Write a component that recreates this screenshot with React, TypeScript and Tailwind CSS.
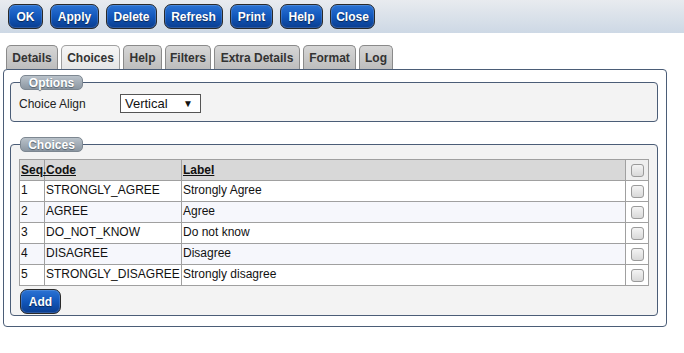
import React from "react";

const buttons: [string, number][] = [
  ["OK", 35],
  ["Apply", 49],
  ["Delete", 51],
  ["Refresh", 59],
  ["Print", 43],
  ["Help", 43],
  ["Close", 45],
];

const tabs: [string, number][] = [
  ["Details", 52],
  ["Choices", 59],
  ["Help", 39],
  ["Filters", 46],
  ["Extra Details", 86],
  ["Format", 53],
  ["Log", 34],
];

const rows = [
  ["1", "STRONGLY_AGREE", "Strongly Agree"],
  ["2", "AGREE", "Agree"],
  ["3", "DO_NOT_KNOW", "Do not know"],
  ["4", "DISAGREE", "Disagree"],
  ["5", "STRONGLY_DISAGREE", "Strongly disagree"],
];

function Btn({ label, w }: { label: string; w: number }) {
  return (
    <div
      style={{ width: w }}
      className="h-[25px] flex items-center justify-center rounded-[7px] border border-[#2a2a2a] bg-gradient-to-b from-[#2b73d4] via-[#1257bb] to-[#0a3d8f] text-white text-[12px] font-bold [text-shadow:0_1px_1px_#0a2450] shadow-[0_0_0_1px_rgba(255,255,255,0.15)_inset]"
    >
      {label}
    </div>
  );
}

function Check() {
  return (
    <div className="w-[13px] h-[13px] rounded-[3px] border border-[#9a9a9a] bg-gradient-to-b from-[#f4f4f4] to-[#d8d8d8]" />
  );
}

function Legend({ text }: { text: string }) {
  return (
    <legend className="ml-[1px] p-0">
      <div className="w-[63px] h-[15px] flex items-center justify-center rounded-[5px] border border-[#7d8791] bg-gradient-to-b from-[#b9c2ca] to-[#8c97a2] text-white text-[12px] font-bold leading-none [text-shadow:0_1px_1px_#55606b]">
        {text}
      </div>
    </legend>
  );
}

export default function App() {
  return (
    <div className="w-[684px] h-[353px] bg-white overflow-hidden text-[#222]" style={{ fontFamily: '"Liberation Sans", Arial, sans-serif' }}>
      <div className="h-[33px] bg-gradient-to-b from-[#e8ebef] to-[#cdd8e5] flex items-center pl-[8px] gap-[7px]">
        {buttons.map(([l, w]) => (
          <Btn key={l} label={l} w={w} />
        ))}
      </div>

      <div className="mt-[12px] ml-[6px] flex gap-[3px] h-[24px] items-end relative z-10">
        {tabs.map(([t, w]) => {
          const active = t === "Choices";
          return (
            <div
              key={t}
              style={{ width: w }}
              className={
                "h-[24px] flex items-center justify-center text-[12px] font-bold text-[#333] border border-b-0 rounded-t-[5px] " +
                (active
                  ? "border-[#a0a0a0] bg-gradient-to-b from-[#f6f6f6] to-[#e6e6e6]"
                  : "border-[#8a8a8a] bg-gradient-to-b from-[#d6d6d6] to-[#bdbdbd]")
              }
            >
              {t}
            </div>
          );
        })}
      </div>

      <div className="ml-[3px] w-[664px] h-[258px] border border-[#4b5d77] rounded-[4px] px-[6px] pt-[5px]">
        <fieldset className="w-[648px] h-[47px] border border-[#4b5d77] rounded-[4px] bg-[#f3f3f3] px-[8px]">
          <Legend text="Options" />
          <div className="flex items-center mt-[4px] text-[12px]">
            <div className="w-[101px]">Choice Align</div>
            <div className="w-[81px] h-[19px] border border-[#555] bg-white flex items-center justify-between px-[4px] text-[13px] text-[#111]">
              <span>Vertical</span>
              <span className="text-[10px] mr-[3px]">▼</span>
            </div>
          </div>
        </fieldset>

        <fieldset className="mt-[15px] w-[648px] h-[179px] border border-[#4b5d77] rounded-[4px] bg-[#f3f3f3] px-[8px]">
          <Legend text="Choices" />
          <table className="mt-[7px] w-[629px] border-collapse text-[12px] text-[#111] table-fixed">
            <colgroup>
              <col className="w-[25px]" />
              <col className="w-[137px]" />
              <col className="w-[444px]" />
              <col className="w-[23px]" />
            </colgroup>
            <thead>
              <tr className="h-[21px] bg-[#d8d8d8]">
                <th className="border border-[#a0a0a0] text-left font-bold underline px-[1px]">Seq.</th>
                <th className="border border-[#a0a0a0] text-left font-bold underline px-[1px]">Code</th>
                <th className="border border-[#a0a0a0] text-left font-bold underline px-[1px]">Label</th>
                <th className="border border-[#a0a0a0] bg-[#eeeeee]">
                  <div className="flex justify-center"><Check /></div>
                </th>
              </tr>
            </thead>
            <tbody>
              {rows.map((r, i) => (
                <tr key={r[0]} className={"h-[21px] " + (i % 2 === 1 ? "bg-[#f6f7fc]" : "bg-white")}>
                  <td className="border border-[#a0a0a0] px-[1px] pb-[2px]">{r[0]}</td>
                  <td className="border border-[#a0a0a0] px-[1px] pb-[2px] whitespace-nowrap">{r[1]}</td>
                  <td className="border border-[#a0a0a0] px-[1px] pb-[2px]">{r[2]}</td>
                  <td className="border border-[#a0a0a0] bg-white">
                    <div className="flex justify-center"><Check /></div>
                  </td>
                </tr>
              ))}
            </tbody>
          </table>
          <div className="mt-[3px] ml-[1px]">
            <Btn label="Add" w={41} />
          </div>
        </fieldset>
      </div>
    </div>
  );
}
